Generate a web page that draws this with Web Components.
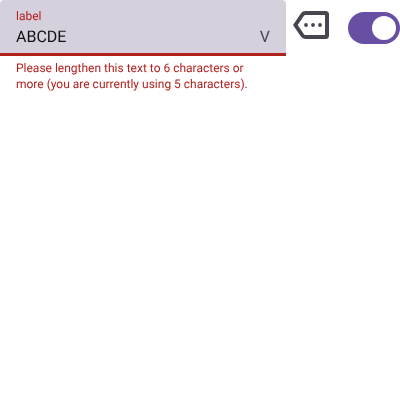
<!DOCTYPE html>
<html lang="en"><head><meta charset="utf-8"><title>Form</title>
<style>body{margin:0;background:#fff;font-family:Roboto,sans-serif;text-rendering:geometricPrecision}</style></head>
<body>
<form-row><filled-field label="label" value="ABCDE" trailing="V">Please lengthen this text to 6 characters or more (you are currently using 5 characters).</filled-field><more-icon></more-icon><toggle-switch></toggle-switch></form-row>
<script>
const define=(name,html,setup)=>customElements.define(name,class extends HTMLElement{
  connectedCallback(){if(this.shadowRoot)return;const r=this.attachShadow({mode:'open'});r.innerHTML=html;if(setup)setup(this,r);}
});
define('form-row',`<style>:host{display:flex;align-items:flex-start;width:400px}</style><slot></slot>`);
define('filled-field',`<style>
:host{display:block;width:286px;flex:none;will-change:transform}
.box{box-sizing:border-box;height:56px;padding:8px 16px 4px;background:#d6d0dc;border-radius:4px 4px 0 0;border-bottom:3px solid #b3211e;display:flex;justify-content:space-between;align-items:flex-end}
.label{font-size:12px;line-height:16px;margin-bottom:1px;color:#b3211e}
.value{font-size:16px;line-height:24px;color:#121116}
.end{font-size:16px;line-height:24px;color:#49454f}
.help{padding:4px 16px 0;font-size:12px;line-height:16px;color:#b3211e}
</style><div class="box"><div><div class="label"></div><div class="value"></div></div><div class="end"></div></div><div class="help"><slot></slot></div>`,
(h,r)=>{r.querySelector('.label').textContent=h.getAttribute('label');r.querySelector('.value').textContent=h.getAttribute('value');r.querySelector('.end').textContent=h.getAttribute('trailing');});
define('more-icon',`<style>:host{display:block;margin:7px 0 0 7px;width:36px;height:36px}svg{display:block}</style>
<svg width="36" height="36" viewBox="0 0 36 36" fill="#49454f"><path d="M12.500 6H32.500Q34 6 34 7.500V28.500Q34 30 32.500 30H12.500Q10.500 30 9.500 28.500L2.400 18L9.500 7.500Q10.500 6 12.500 6Z" fill="none" stroke="#49454f" stroke-width="4"/><circle cx="13" cy="18" r="1.900"/><circle cx="20" cy="18" r="1.900"/><circle cx="27" cy="18" r="1.900"/></svg>`);
define('toggle-switch',`<style>:host{display:flex;box-sizing:border-box;justify-content:flex-end;align-items:center;margin:12px 0 0 19px;width:52px;height:32px;padding:4px;border-radius:16px;background:#6750a4}i{width:24px;height:24px;border-radius:50%;background:#fff}</style><i></i>`);
</script></body></html>
